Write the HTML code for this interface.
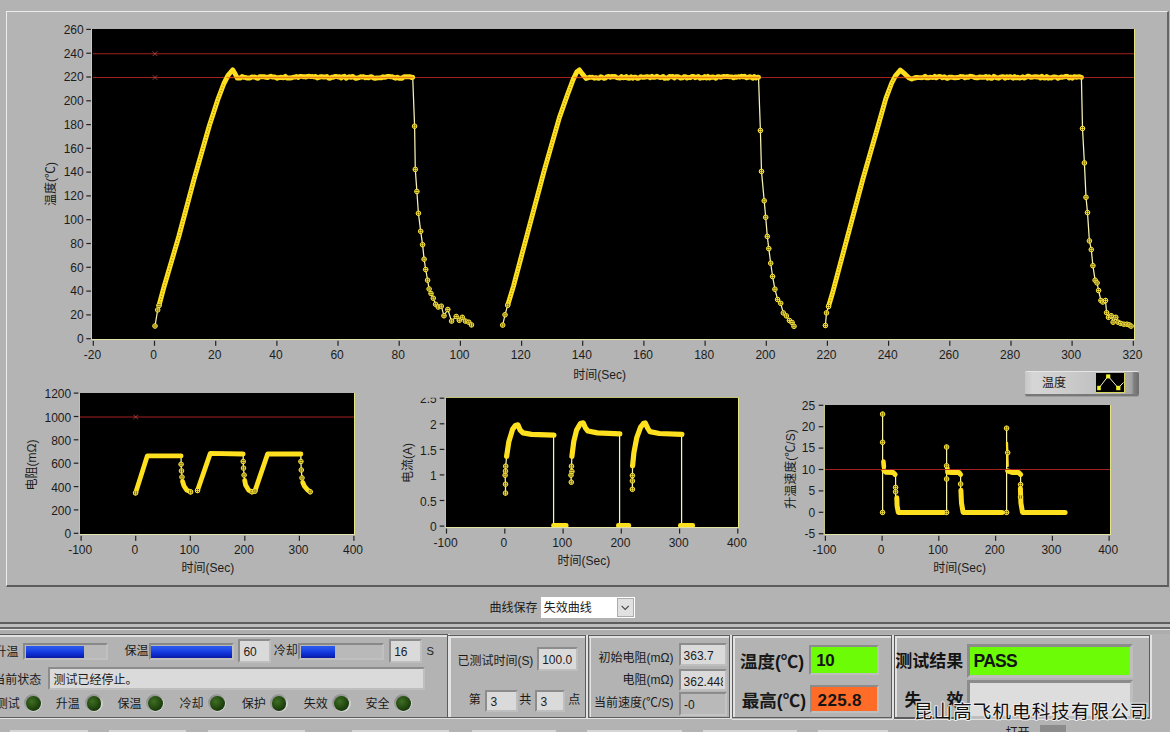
<!DOCTYPE html><html lang="zh"><head><meta charset="utf-8"><title>LabVIEW 测试曲线</title><style>html,body{margin:0;padding:0;overflow:hidden}body{width:1170px;height:732px;overflow:hidden;position:relative;background:#b3b3b3;font-family:"Liberation Sans","Noto Sans CJK SC",sans-serif;font-size:12px;color:#1c1c1c}.cj{display:inline-block;color:#1a1a1a}#root{position:absolute;left:0;top:0;width:1170px;height:732px;overflow:hidden;background:#b3b3b3}</style></head><body><div id="root"><svg width="0" height="0" style="position:absolute"><defs><g id="mk"><circle r="2.3" fill="#3a3000" stroke="#ffea40" stroke-width="1"/><path d="M-2.3 0H2.3M0 -2.3V2.3" stroke="#ffea40" stroke-width="0.8"/></g></defs></svg><div style="position:absolute;left:6.0px;top:11.0px;width:1162.5px;height:576.4px;box-sizing:border-box;background:#b4b4b4;border:solid;border-width:1px 2px 2px 1px;border-color:#ececec #666 #5c5c5c #ececec;"></div><div style="position:absolute;left:90.8px;top:28.5px;width:1043.9px;height:311.7px;background:#000;border-style:solid;border-color:#c2c274 #e4e480 #e2e2a4 #c9c9b6;border-width:0 1.2px 1.2px 1.7px;box-sizing:border-box;"></div><svg style="position:absolute;left:92.5px;top:28.5px" width="1041.0" height="310.5" viewBox="92.5 28.5 1041.0 310.5"><line x1="92.5" x2="1133.5" y1="53.2" y2="53.2" stroke="#a32020" stroke-width="1.1"/><path d="M152.2 50.9l4.6 4.6m0 -4.6l-4.6 4.6" stroke="#b44a4a" stroke-width="0.8" fill="none"/><line x1="92.5" x2="1133.5" y1="77.0" y2="77.0" stroke="#a32020" stroke-width="1.1"/><path d="M152.2 74.7l4.6 4.6m0 -4.6l-4.6 4.6" stroke="#b44a4a" stroke-width="0.8" fill="none"/><polyline points="154.5,325.5 157.2,309.4 158.5,305.0 163.7,285.7 178.3,236.0 193.6,178.6 208.9,125.0 217.6,98.3 223.4,83.0 227.8,74.5 232.2,69.4 234.2,72.5 236.8,77.6 240.0,77.2 240.0,76.3 242.0,76.0 244.0,76.9 246.0,75.8 248.0,76.7 250.0,76.4 252.0,75.8 254.0,76.6 256.0,75.8 258.0,76.5 260.0,75.8 262.0,75.9 264.0,76.5 266.0,77.2 268.0,75.9 270.0,76.1 272.0,76.8 274.0,77.4 276.0,76.7 278.0,76.4 280.0,77.5 282.0,75.8 284.0,77.2 286.0,76.2 288.0,76.0 290.0,75.9 292.0,76.3 294.0,77.2 296.0,76.0 298.0,76.7 300.0,76.9 302.0,76.4 304.0,76.7 306.0,75.8 308.0,75.8 310.0,76.1 312.0,76.9 314.0,76.5 316.0,76.3 318.0,76.8 320.0,76.5 322.0,76.2 324.0,77.1 326.0,77.0 328.0,76.1 330.0,76.7 332.0,76.6 334.0,77.3 336.0,77.0 338.0,76.2 340.0,77.5 342.0,75.9 344.0,76.5 346.0,77.1 348.0,76.0 350.0,76.6 352.0,75.8 354.0,76.9 356.0,77.1 358.0,76.7 360.0,77.3 362.0,76.3 364.0,77.0 366.0,76.8 368.0,76.7 370.0,76.5 372.0,77.2 374.0,77.4 376.0,76.6 378.0,76.9 380.0,75.8 382.0,77.0 384.0,76.9 386.0,77.5 388.0,77.2 390.0,76.2 392.0,76.4 394.0,76.9 396.0,75.7 398.0,76.5 400.0,76.0 402.0,75.9 404.0,75.8 406.0,77.1 408.0,75.9 410.0,76.1 412.0,76.4 412.2,76.6 412.2,76.4 414.1,125.7 414.8,168.9 416.4,191.0 417.9,212.8 420.2,230.8 422.1,244.2 423.6,258.7 425.2,269.0 427.1,279.7 428.6,288.5 430.5,293.0 432.8,297.7 435.1,303.8 437.8,306.5 440.8,305.7 443.5,315.3 447.3,309.0 451.1,320.6 455.7,316.0 458.8,319.8 461.8,316.8 464.9,320.6 468.3,321.7 471.0,324.4" fill="none" stroke="#f7f2b4" stroke-width="1.25"/><polyline points="158.5,305.0 163.7,285.7 178.3,236.0 193.6,178.6 208.9,125.0 217.6,98.3 223.4,83.0 227.8,74.5 232.2,69.4 234.2,72.5 236.8,77.6 240.0,77.2 240.0,77.5 241.6,76.0 243.2,76.7 244.8,76.9 246.4,77.6 248.0,77.4 249.6,77.5 251.2,76.4 252.8,76.6 254.4,76.5 256.0,77.6 257.6,77.7 259.2,76.1 260.8,76.2 262.4,76.3 264.0,76.3 265.6,76.8 267.2,77.0 268.8,76.3 270.4,75.8 272.0,76.6 273.6,76.5 275.2,76.9 276.8,77.7 278.4,77.2 280.0,76.8 281.6,77.0 283.2,77.2 284.8,75.9 286.4,77.6 288.0,77.4 289.6,77.5 291.2,77.4 292.8,76.6 294.4,76.6 296.0,76.0 297.6,77.1 299.2,75.9 300.8,75.9 302.4,76.2 304.0,76.1 305.6,76.5 307.2,75.9 308.8,75.8 310.4,76.1 312.0,76.0 313.6,76.5 315.2,75.9 316.8,77.5 318.4,77.0 320.0,76.1 321.6,76.3 323.2,76.5 324.8,76.5 326.4,76.0 328.0,77.5 329.6,77.8 331.2,76.7 332.8,76.8 334.4,76.0 336.0,76.0 337.6,76.5 339.2,76.3 340.8,77.5 342.4,76.1 344.0,75.8 345.6,77.7 347.2,76.9 348.8,76.1 350.4,76.9 352.0,75.9 353.6,76.9 355.2,77.8 356.8,77.5 358.4,77.2 360.0,76.3 361.6,76.5 363.2,76.1 364.8,77.3 366.4,76.9 368.0,77.4 369.6,76.5 371.2,76.2 372.8,77.4 374.4,77.8 376.0,77.5 377.6,77.4 379.2,77.4 380.8,77.3 382.4,76.3 384.0,76.8 385.6,76.5 387.2,75.9 388.8,75.9 390.4,76.4 392.0,76.3 393.6,77.2 395.2,77.7 396.8,76.7 398.4,77.7 400.0,77.8 401.6,77.7 403.2,76.5 404.8,76.2 406.4,76.3 408.0,76.2 409.6,76.2 411.2,77.0 412.2,76.8" fill="none" stroke="#ffe01e" stroke-width="4.9" stroke-linecap="round" stroke-linejoin="round"/><polyline points="158.5,305.0 163.7,285.7 178.3,236.0 193.6,178.6 208.9,125.0 217.6,98.3 223.4,83.0" fill="none" stroke="#4a3c00" stroke-width="1.2" stroke-dasharray="1 1.9" opacity="0.55"/><use href="#mk" x="154.5" y="325.5"/><use href="#mk" x="157.2" y="309.4"/><use href="#mk" x="158.5" y="305.0"/><use href="#mk" x="414.1" y="125.7"/><use href="#mk" x="414.8" y="168.9"/><use href="#mk" x="416.4" y="191.0"/><use href="#mk" x="417.9" y="212.8"/><use href="#mk" x="420.2" y="230.8"/><use href="#mk" x="422.1" y="244.2"/><use href="#mk" x="423.6" y="258.7"/><use href="#mk" x="425.2" y="269.0"/><use href="#mk" x="427.1" y="279.7"/><use href="#mk" x="428.6" y="288.5"/><use href="#mk" x="430.5" y="293.0"/><use href="#mk" x="432.8" y="297.7"/><use href="#mk" x="435.1" y="303.8"/><use href="#mk" x="437.8" y="306.5"/><use href="#mk" x="440.8" y="305.7"/><use href="#mk" x="443.5" y="315.3"/><use href="#mk" x="447.3" y="309.0"/><use href="#mk" x="451.1" y="320.6"/><use href="#mk" x="455.7" y="316.0"/><use href="#mk" x="458.8" y="319.8"/><use href="#mk" x="461.8" y="316.8"/><use href="#mk" x="464.9" y="320.6"/><use href="#mk" x="468.3" y="321.7"/><use href="#mk" x="471.0" y="324.4"/><polyline points="502.2,324.6 504.5,314.3 507.2,304.7 513.0,285.6 528.2,228.3 543.5,170.9 558.8,117.4 566.9,94.4 572.6,79.1 576.2,71.5 578.9,69.4 581.8,73.4 585.6,78.0 589.0,77.0 589.0,77.3 591.0,77.2 593.0,76.6 595.0,76.9 597.0,77.1 599.0,75.9 601.0,76.9 603.0,77.3 605.0,77.1 607.0,77.1 609.0,76.6 611.0,76.0 613.0,77.1 615.0,76.3 617.0,77.1 619.0,77.4 621.0,76.4 623.0,76.4 625.0,77.4 627.0,77.0 629.0,76.0 631.0,75.9 633.0,76.0 635.0,77.3 637.0,77.2 639.0,76.0 641.0,77.2 643.0,77.5 645.0,76.9 647.0,76.3 649.0,76.7 651.0,75.9 653.0,75.7 655.0,77.4 657.0,76.9 659.0,76.6 661.0,77.4 663.0,76.5 665.0,77.3 667.0,77.2 669.0,76.1 671.0,76.2 673.0,76.2 675.0,76.1 677.0,76.8 679.0,76.2 681.0,76.5 683.0,75.9 685.0,77.3 687.0,76.3 689.0,76.5 691.0,76.8 693.0,77.3 695.0,76.5 697.0,77.4 699.0,76.6 701.0,76.7 703.0,76.6 705.0,75.7 707.0,76.5 709.0,76.0 711.0,75.7 713.0,77.1 715.0,76.0 717.0,76.6 719.0,77.0 721.0,76.7 723.0,76.3 725.0,76.6 727.0,76.7 729.0,77.1 731.0,75.9 733.0,76.7 735.0,76.1 737.0,76.2 739.0,77.1 741.0,76.6 743.0,76.7 745.0,77.1 747.0,77.3 749.0,76.5 751.0,76.8 753.0,76.6 755.0,76.6 757.0,76.9 758.0,76.6 758.0,76.4 759.9,130.0 761.0,170.9 763.7,200.3 765.2,216.8 766.8,235.9 768.3,248.1 770.2,262.7 772.1,276.0 774.4,288.7 777.1,299.0 780.2,302.8 782.8,312.4 785.9,315.4 788.9,320.0 791.6,322.0 793.5,325.8" fill="none" stroke="#f7f2b4" stroke-width="1.25"/><polyline points="507.2,304.7 513.0,285.6 528.2,228.3 543.5,170.9 558.8,117.4 566.9,94.4 572.6,79.1 576.2,71.5 578.9,69.4 581.8,73.4 585.6,78.0 589.0,77.0 589.0,76.7 590.6,76.9 592.2,76.8 593.8,77.7 595.4,77.2 597.0,77.6 598.6,77.7 600.2,76.3 601.8,76.9 603.4,77.7 605.0,77.5 606.6,76.1 608.2,76.0 609.8,76.7 611.4,75.9 613.0,76.3 614.6,75.9 616.2,77.1 617.8,77.4 619.4,77.6 621.0,76.1 622.6,77.2 624.2,77.1 625.8,76.1 627.4,77.6 629.0,77.7 630.6,76.2 632.2,77.7 633.8,76.6 635.4,76.8 637.0,77.8 638.6,77.5 640.2,76.1 641.8,76.7 643.4,76.8 645.0,76.5 646.6,76.2 648.2,76.4 649.8,77.2 651.4,75.8 653.0,76.9 654.6,76.7 656.2,75.8 657.8,76.5 659.4,77.0 661.0,76.8 662.6,75.9 664.2,77.8 665.8,77.4 667.4,77.7 669.0,76.0 670.6,76.3 672.2,75.9 673.8,77.4 675.4,76.3 677.0,76.1 678.6,76.6 680.2,77.6 681.8,77.4 683.4,76.3 685.0,76.1 686.6,77.6 688.2,76.9 689.8,77.2 691.4,76.0 693.0,75.9 694.6,77.2 696.2,76.7 697.8,75.9 699.4,77.7 701.0,77.1 702.6,77.4 704.2,76.0 705.8,77.5 707.4,75.9 709.0,77.5 710.6,76.7 712.2,76.5 713.8,76.9 715.4,77.7 717.0,76.3 718.6,76.1 720.2,76.9 721.8,76.3 723.4,76.0 725.0,76.1 726.6,75.9 728.2,76.2 729.8,76.4 731.4,76.4 733.0,77.3 734.6,76.4 736.2,76.8 737.8,76.2 739.4,76.5 741.0,75.8 742.6,76.3 744.2,75.8 745.8,77.3 747.4,76.9 749.0,76.2 750.6,76.7 752.2,77.7 753.8,76.0 755.4,77.4 757.0,76.7 758.0,76.8" fill="none" stroke="#ffe01e" stroke-width="4.9" stroke-linecap="round" stroke-linejoin="round"/><polyline points="507.2,304.7 513.0,285.6 528.2,228.3 543.5,170.9 558.8,117.4 566.9,94.4 572.6,79.1" fill="none" stroke="#4a3c00" stroke-width="1.2" stroke-dasharray="1 1.9" opacity="0.55"/><use href="#mk" x="502.2" y="324.6"/><use href="#mk" x="504.5" y="314.3"/><use href="#mk" x="507.2" y="304.7"/><use href="#mk" x="759.9" y="130.0"/><use href="#mk" x="761.0" y="170.9"/><use href="#mk" x="763.7" y="200.3"/><use href="#mk" x="765.2" y="216.8"/><use href="#mk" x="766.8" y="235.9"/><use href="#mk" x="768.3" y="248.1"/><use href="#mk" x="770.2" y="262.7"/><use href="#mk" x="772.1" y="276.0"/><use href="#mk" x="774.4" y="288.7"/><use href="#mk" x="777.1" y="299.0"/><use href="#mk" x="780.2" y="302.8"/><use href="#mk" x="782.8" y="312.4"/><use href="#mk" x="785.9" y="315.4"/><use href="#mk" x="788.9" y="320.0"/><use href="#mk" x="791.6" y="322.0"/><use href="#mk" x="793.5" y="325.8"/><polyline points="824.9,325.0 826.0,312.4 828.0,306.0 831.8,293.3 847.1,235.9 862.4,178.5 877.7,125.0 885.3,98.2 891.0,83.0 894.9,75.3 899.8,69.6 904.4,73.4 908.3,77.2 911.3,78.6 915.0,77.0 915.0,76.6 917.0,77.2 919.0,76.4 921.0,76.6 923.0,76.9 925.0,77.5 927.0,76.3 929.0,77.2 931.0,77.0 933.0,76.8 935.0,76.4 937.0,76.3 939.0,75.8 941.0,75.9 943.0,75.8 945.0,77.0 947.0,76.2 949.0,76.0 951.0,75.9 953.0,77.2 955.0,77.3 957.0,76.9 959.0,76.2 961.0,76.1 963.0,76.2 965.0,76.5 967.0,76.0 969.0,76.5 971.0,76.2 973.0,77.4 975.0,77.5 977.0,76.7 979.0,76.1 981.0,77.4 983.0,76.3 985.0,76.3 987.0,75.7 989.0,76.4 991.0,76.6 993.0,76.6 995.0,76.1 997.0,76.6 999.0,75.7 1001.0,76.2 1003.0,75.9 1005.0,76.4 1007.0,75.8 1009.0,75.7 1011.0,76.2 1013.0,76.1 1015.0,76.8 1017.0,76.7 1019.0,77.1 1021.0,76.9 1023.0,77.0 1025.0,77.3 1027.0,76.4 1029.0,76.3 1031.0,77.5 1033.0,76.0 1035.0,77.0 1037.0,76.9 1039.0,75.8 1041.0,77.2 1043.0,77.3 1045.0,76.8 1047.0,77.0 1049.0,77.2 1051.0,76.0 1053.0,76.6 1055.0,76.6 1057.0,77.2 1059.0,77.1 1061.0,77.2 1063.0,76.8 1065.0,77.3 1067.0,76.9 1069.0,76.9 1071.0,76.1 1073.0,75.8 1075.0,75.9 1077.0,76.3 1079.0,75.9 1080.9,76.6 1080.9,76.4 1082.0,128.0 1083.9,162.4 1085.5,196.8 1087.0,212.1 1088.9,240.4 1090.8,249.1 1092.4,265.2 1094.6,279.7 1096.6,282.4 1098.1,290.0 1100.4,300.0 1102.3,301.5 1105.0,300.0 1106.1,312.2 1108.0,316.8 1110.7,315.2 1112.6,321.7 1115.3,316.8 1117.6,321.7 1120.2,322.9 1123.3,323.7 1126.4,323.7 1128.7,324.4 1130.6,325.6" fill="none" stroke="#f7f2b4" stroke-width="1.25"/><polyline points="828.0,306.0 831.8,293.3 847.1,235.9 862.4,178.5 877.7,125.0 885.3,98.2 891.0,83.0 894.9,75.3 899.8,69.6 904.4,73.4 908.3,77.2 911.3,78.6 915.0,77.0 915.0,77.5 916.6,76.9 918.2,77.1 919.8,77.1 921.4,77.2 923.0,76.8 924.6,75.8 926.2,77.4 927.8,77.3 929.4,76.8 931.0,76.9 932.6,77.1 934.2,75.9 935.8,77.3 937.4,76.3 939.0,75.9 940.6,76.3 942.2,77.3 943.8,76.2 945.4,77.3 947.0,77.8 948.6,76.8 950.2,76.6 951.8,76.8 953.4,77.2 955.0,77.3 956.6,77.0 958.2,77.1 959.8,76.0 961.4,76.1 963.0,76.3 964.6,77.3 966.2,76.4 967.8,76.9 969.4,75.8 971.0,75.9 972.6,76.3 974.2,77.1 975.8,77.2 977.4,77.2 979.0,76.4 980.6,76.8 982.2,76.7 983.8,76.7 985.4,76.0 987.0,77.6 988.6,76.2 990.2,77.8 991.8,77.7 993.4,75.8 995.0,76.7 996.6,77.4 998.2,77.7 999.8,76.7 1001.4,76.3 1003.0,76.2 1004.6,77.7 1006.2,76.2 1007.8,77.0 1009.4,76.1 1011.0,76.8 1012.6,77.7 1014.2,76.1 1015.8,77.4 1017.4,76.8 1019.0,77.6 1020.6,77.2 1022.2,76.3 1023.8,77.6 1025.4,76.8 1027.0,75.8 1028.6,75.8 1030.2,76.8 1031.8,76.7 1033.4,76.4 1035.0,76.1 1036.6,76.5 1038.2,76.4 1039.8,77.5 1041.4,75.8 1043.0,77.3 1044.6,77.5 1046.2,76.0 1047.8,77.7 1049.4,77.2 1051.0,77.6 1052.6,76.4 1054.2,76.5 1055.8,76.6 1057.4,77.8 1059.0,77.0 1060.6,76.5 1062.2,76.7 1063.8,76.4 1065.4,75.9 1067.0,76.0 1068.6,77.5 1070.2,76.4 1071.8,77.7 1073.4,76.3 1075.0,76.3 1076.6,76.8 1078.2,76.2 1079.8,76.5 1080.9,76.8" fill="none" stroke="#ffe01e" stroke-width="4.9" stroke-linecap="round" stroke-linejoin="round"/><polyline points="828.0,306.0 831.8,293.3 847.1,235.9 862.4,178.5 877.7,125.0 885.3,98.2 891.0,83.0 894.9,75.3" fill="none" stroke="#4a3c00" stroke-width="1.2" stroke-dasharray="1 1.9" opacity="0.55"/><use href="#mk" x="824.9" y="325.0"/><use href="#mk" x="826.0" y="312.4"/><use href="#mk" x="828.0" y="306.0"/><use href="#mk" x="1082.0" y="128.0"/><use href="#mk" x="1083.9" y="162.4"/><use href="#mk" x="1085.5" y="196.8"/><use href="#mk" x="1087.0" y="212.1"/><use href="#mk" x="1088.9" y="240.4"/><use href="#mk" x="1090.8" y="249.1"/><use href="#mk" x="1092.4" y="265.2"/><use href="#mk" x="1094.6" y="279.7"/><use href="#mk" x="1096.6" y="282.4"/><use href="#mk" x="1098.1" y="290.0"/><use href="#mk" x="1100.4" y="300.0"/><use href="#mk" x="1102.3" y="301.5"/><use href="#mk" x="1105.0" y="300.0"/><use href="#mk" x="1106.1" y="312.2"/><use href="#mk" x="1108.0" y="316.8"/><use href="#mk" x="1110.7" y="315.2"/><use href="#mk" x="1112.6" y="321.7"/><use href="#mk" x="1115.3" y="316.8"/><use href="#mk" x="1117.6" y="321.7"/><use href="#mk" x="1120.2" y="322.9"/><use href="#mk" x="1123.3" y="323.7"/><use href="#mk" x="1126.4" y="323.7"/><use href="#mk" x="1128.7" y="324.4"/><use href="#mk" x="1130.6" y="325.6"/><line x1="226.0" x2="413.0" y1="77.0" y2="77.0" stroke="#e04a10" stroke-width="1.3" opacity="0.6"/><line x1="573.0" x2="759.0" y1="77.0" y2="77.0" stroke="#e04a10" stroke-width="1.3" opacity="0.6"/><line x1="894.0" x2="1082.0" y1="77.0" y2="77.0" stroke="#e04a10" stroke-width="1.3" opacity="0.6"/></svg><svg style="position:absolute;left:0;top:0;pointer-events:none" width="1170" height="732"><rect x="86.3" y="338.1" width="4.6" height="1.2" fill="#222"/><rect x="86.3" y="314.3" width="4.6" height="1.2" fill="#222"/><rect x="86.3" y="290.5" width="4.6" height="1.2" fill="#222"/><rect x="86.3" y="266.7" width="4.6" height="1.2" fill="#222"/><rect x="86.3" y="242.9" width="4.6" height="1.2" fill="#222"/><rect x="86.3" y="219.1" width="4.6" height="1.2" fill="#222"/><rect x="86.3" y="195.3" width="4.6" height="1.2" fill="#222"/><rect x="86.3" y="171.5" width="4.6" height="1.2" fill="#222"/><rect x="86.3" y="147.7" width="4.6" height="1.2" fill="#222"/><rect x="86.3" y="124.0" width="4.6" height="1.2" fill="#222"/><rect x="86.3" y="100.2" width="4.6" height="1.2" fill="#222"/><rect x="86.3" y="76.4" width="4.6" height="1.2" fill="#222"/><rect x="86.3" y="52.6" width="4.6" height="1.2" fill="#222"/><rect x="86.3" y="28.8" width="4.6" height="1.2" fill="#222"/><rect x="92.7" y="340.8" width="1.2" height="5" fill="#222"/><rect x="153.9" y="340.8" width="1.2" height="5" fill="#222"/><rect x="215.1" y="340.8" width="1.2" height="5" fill="#222"/><rect x="276.3" y="340.8" width="1.2" height="5" fill="#222"/><rect x="337.4" y="340.8" width="1.2" height="5" fill="#222"/><rect x="398.6" y="340.8" width="1.2" height="5" fill="#222"/><rect x="459.8" y="340.8" width="1.2" height="5" fill="#222"/><rect x="521.0" y="340.8" width="1.2" height="5" fill="#222"/><rect x="582.1" y="340.8" width="1.2" height="5" fill="#222"/><rect x="643.3" y="340.8" width="1.2" height="5" fill="#222"/><rect x="704.5" y="340.8" width="1.2" height="5" fill="#222"/><rect x="765.7" y="340.8" width="1.2" height="5" fill="#222"/><rect x="826.8" y="340.8" width="1.2" height="5" fill="#222"/><rect x="888.0" y="340.8" width="1.2" height="5" fill="#222"/><rect x="949.2" y="340.8" width="1.2" height="5" fill="#222"/><rect x="1010.4" y="340.8" width="1.2" height="5" fill="#222"/><rect x="1071.5" y="340.8" width="1.2" height="5" fill="#222"/><rect x="1132.7" y="340.8" width="1.2" height="5" fill="#222"/></svg><div style="position:absolute;top:331.0px;font-size:12px;line-height:17px;height:17px;white-space:nowrap;color:#1c1c1c;right:1086.3px;text-align:right;">0</div><div style="position:absolute;top:307.2px;font-size:12px;line-height:17px;height:17px;white-space:nowrap;color:#1c1c1c;right:1086.3px;text-align:right;">20</div><div style="position:absolute;top:283.4px;font-size:12px;line-height:17px;height:17px;white-space:nowrap;color:#1c1c1c;right:1086.3px;text-align:right;">40</div><div style="position:absolute;top:259.6px;font-size:12px;line-height:17px;height:17px;white-space:nowrap;color:#1c1c1c;right:1086.3px;text-align:right;">60</div><div style="position:absolute;top:235.8px;font-size:12px;line-height:17px;height:17px;white-space:nowrap;color:#1c1c1c;right:1086.3px;text-align:right;">80</div><div style="position:absolute;top:212.0px;font-size:12px;line-height:17px;height:17px;white-space:nowrap;color:#1c1c1c;right:1086.3px;text-align:right;">100</div><div style="position:absolute;top:188.2px;font-size:12px;line-height:17px;height:17px;white-space:nowrap;color:#1c1c1c;right:1086.3px;text-align:right;">120</div><div style="position:absolute;top:164.4px;font-size:12px;line-height:17px;height:17px;white-space:nowrap;color:#1c1c1c;right:1086.3px;text-align:right;">140</div><div style="position:absolute;top:140.6px;font-size:12px;line-height:17px;height:17px;white-space:nowrap;color:#1c1c1c;right:1086.3px;text-align:right;">160</div><div style="position:absolute;top:116.9px;font-size:12px;line-height:17px;height:17px;white-space:nowrap;color:#1c1c1c;right:1086.3px;text-align:right;">180</div><div style="position:absolute;top:93.1px;font-size:12px;line-height:17px;height:17px;white-space:nowrap;color:#1c1c1c;right:1086.3px;text-align:right;">200</div><div style="position:absolute;top:69.3px;font-size:12px;line-height:17px;height:17px;white-space:nowrap;color:#1c1c1c;right:1086.3px;text-align:right;">220</div><div style="position:absolute;top:45.5px;font-size:12px;line-height:17px;height:17px;white-space:nowrap;color:#1c1c1c;right:1086.3px;text-align:right;">240</div><div style="position:absolute;top:21.7px;font-size:12px;line-height:17px;height:17px;white-space:nowrap;color:#1c1c1c;right:1086.3px;text-align:right;">260</div><div style="position:absolute;top:347.0px;font-size:12px;line-height:17px;height:17px;white-space:nowrap;color:#1c1c1c;left:92.4px;width:400px;margin-left:-200px;text-align:center;">-20</div><div style="position:absolute;top:347.0px;font-size:12px;line-height:17px;height:17px;white-space:nowrap;color:#1c1c1c;left:153.6px;width:400px;margin-left:-200px;text-align:center;">0</div><div style="position:absolute;top:347.0px;font-size:12px;line-height:17px;height:17px;white-space:nowrap;color:#1c1c1c;left:214.8px;width:400px;margin-left:-200px;text-align:center;">20</div><div style="position:absolute;top:347.0px;font-size:12px;line-height:17px;height:17px;white-space:nowrap;color:#1c1c1c;left:276.0px;width:400px;margin-left:-200px;text-align:center;">40</div><div style="position:absolute;top:347.0px;font-size:12px;line-height:17px;height:17px;white-space:nowrap;color:#1c1c1c;left:337.1px;width:400px;margin-left:-200px;text-align:center;">60</div><div style="position:absolute;top:347.0px;font-size:12px;line-height:17px;height:17px;white-space:nowrap;color:#1c1c1c;left:398.3px;width:400px;margin-left:-200px;text-align:center;">80</div><div style="position:absolute;top:347.0px;font-size:12px;line-height:17px;height:17px;white-space:nowrap;color:#1c1c1c;left:459.5px;width:400px;margin-left:-200px;text-align:center;">100</div><div style="position:absolute;top:347.0px;font-size:12px;line-height:17px;height:17px;white-space:nowrap;color:#1c1c1c;left:520.7px;width:400px;margin-left:-200px;text-align:center;">120</div><div style="position:absolute;top:347.0px;font-size:12px;line-height:17px;height:17px;white-space:nowrap;color:#1c1c1c;left:581.8px;width:400px;margin-left:-200px;text-align:center;">140</div><div style="position:absolute;top:347.0px;font-size:12px;line-height:17px;height:17px;white-space:nowrap;color:#1c1c1c;left:643.0px;width:400px;margin-left:-200px;text-align:center;">160</div><div style="position:absolute;top:347.0px;font-size:12px;line-height:17px;height:17px;white-space:nowrap;color:#1c1c1c;left:704.2px;width:400px;margin-left:-200px;text-align:center;">180</div><div style="position:absolute;top:347.0px;font-size:12px;line-height:17px;height:17px;white-space:nowrap;color:#1c1c1c;left:765.4px;width:400px;margin-left:-200px;text-align:center;">200</div><div style="position:absolute;top:347.0px;font-size:12px;line-height:17px;height:17px;white-space:nowrap;color:#1c1c1c;left:826.5px;width:400px;margin-left:-200px;text-align:center;">220</div><div style="position:absolute;top:347.0px;font-size:12px;line-height:17px;height:17px;white-space:nowrap;color:#1c1c1c;left:887.7px;width:400px;margin-left:-200px;text-align:center;">240</div><div style="position:absolute;top:347.0px;font-size:12px;line-height:17px;height:17px;white-space:nowrap;color:#1c1c1c;left:948.9px;width:400px;margin-left:-200px;text-align:center;">260</div><div style="position:absolute;top:347.0px;font-size:12px;line-height:17px;height:17px;white-space:nowrap;color:#1c1c1c;left:1010.1px;width:400px;margin-left:-200px;text-align:center;">280</div><div style="position:absolute;top:347.0px;font-size:12px;line-height:17px;height:17px;white-space:nowrap;color:#1c1c1c;left:1071.2px;width:400px;margin-left:-200px;text-align:center;">300</div><div style="position:absolute;top:347.0px;font-size:12px;line-height:17px;height:17px;white-space:nowrap;color:#1c1c1c;left:1132.4px;width:400px;margin-left:-200px;text-align:center;">320</div><div style="position:absolute;top:366.5px;font-size:12px;line-height:17px;height:17px;white-space:nowrap;color:#1c1c1c;left:599.6px;width:400px;margin-left:-200px;text-align:center;"><span class="cj">时间</span>(Sec)</div><div style="position:absolute;left:51.0px;top:183.5px;width:200px;height:18px;margin-left:-100px;margin-top:-9px;line-height:18px;font-size:12px;text-align:center;white-space:nowrap;color:#1c1c1c;transform:rotate(-90deg);"><span class="cj">温度</span>(<span class="cj">℃</span>)</div><div style="position:absolute;left:78.8px;top:392.5px;width:276.7px;height:142.5px;background:#000;border-style:solid;border-color:#c2c274 #e4e480 #e2e2a4 #c6c688;border-width:0 1.2px 1.2px 1.2px;box-sizing:border-box;"></div><svg style="position:absolute;left:80.0px;top:392.5px" width="274.3" height="141.3" viewBox="80.0 392.5 274.3 141.3"><line x1="80.0" x2="354.3" y1="416.5" y2="416.5" stroke="#a32020" stroke-width="1.1"/><path d="M133.4 414.2l4.6 4.6m0 -4.6l-4.6 4.6" stroke="#b44a4a" stroke-width="0.8" fill="none"/><polyline points="181.1,455.4 181.1,463.8 181.5,470.4 182.0,476.6 182.6,481.0" fill="none" stroke="#f7f2b4" stroke-width="1.25"/><polyline points="135.6,492.4 147.3,455.4 181.1,455.4" fill="none" stroke="#ffe01e" stroke-width="4.8" stroke-linecap="round" stroke-linejoin="round"/><polyline points="182.6,481.0 184.0,485.5 186.8,489.6 190.6,491.4" fill="none" stroke="#ffe01e" stroke-width="4.8" stroke-linecap="round" stroke-linejoin="round"/><use href="#mk" x="135.6" y="492.4"/><use href="#mk" x="181.1" y="463.8"/><use href="#mk" x="181.5" y="470.4"/><use href="#mk" x="182.0" y="476.6"/><use href="#mk" x="190.6" y="491.4"/><polyline points="243.2,453.5 243.2,461.0 243.5,467.6 244.1,474.6 244.7,480.0" fill="none" stroke="#f7f2b4" stroke-width="1.25"/><polyline points="197.5,490.0 210.3,452.9 243.2,453.5" fill="none" stroke="#ffe01e" stroke-width="4.8" stroke-linecap="round" stroke-linejoin="round"/><polyline points="244.7,480.0 245.6,484.5 248.6,489.6 252.0,491.3" fill="none" stroke="#ffe01e" stroke-width="4.8" stroke-linecap="round" stroke-linejoin="round"/><use href="#mk" x="197.5" y="490.0"/><use href="#mk" x="243.2" y="461.0"/><use href="#mk" x="243.5" y="467.6"/><use href="#mk" x="244.1" y="474.6"/><use href="#mk" x="252.0" y="491.3"/><polyline points="300.9,453.5 300.9,461.0 301.3,469.5 302.0,477.4 302.8,482.0" fill="none" stroke="#f7f2b4" stroke-width="1.25"/><polyline points="254.9,490.6 267.6,453.5 300.9,453.5" fill="none" stroke="#ffe01e" stroke-width="4.8" stroke-linecap="round" stroke-linejoin="round"/><polyline points="302.8,482.0 304.3,485.5 307.6,489.6 310.2,491.3" fill="none" stroke="#ffe01e" stroke-width="4.8" stroke-linecap="round" stroke-linejoin="round"/><use href="#mk" x="254.9" y="490.6"/><use href="#mk" x="300.9" y="461.0"/><use href="#mk" x="301.3" y="469.5"/><use href="#mk" x="302.0" y="477.4"/><use href="#mk" x="310.2" y="491.3"/></svg><svg style="position:absolute;left:0;top:0;pointer-events:none" width="1170" height="732"><rect x="73.8" y="532.7" width="4.6" height="1.2" fill="#222"/><rect x="73.8" y="509.3" width="4.6" height="1.2" fill="#222"/><rect x="73.8" y="486.0" width="4.6" height="1.2" fill="#222"/><rect x="73.8" y="462.6" width="4.6" height="1.2" fill="#222"/><rect x="73.8" y="439.2" width="4.6" height="1.2" fill="#222"/><rect x="73.8" y="415.9" width="4.6" height="1.2" fill="#222"/><rect x="73.8" y="392.5" width="4.6" height="1.2" fill="#222"/><rect x="80.5" y="535.8" width="1.2" height="5" fill="#222"/><rect x="135.1" y="535.8" width="1.2" height="5" fill="#222"/><rect x="189.7" y="535.8" width="1.2" height="5" fill="#222"/><rect x="244.2" y="535.8" width="1.2" height="5" fill="#222"/><rect x="298.8" y="535.8" width="1.2" height="5" fill="#222"/><rect x="353.3" y="535.8" width="1.2" height="5" fill="#222"/></svg><div style="position:absolute;top:526.4px;font-size:12px;line-height:17px;height:17px;white-space:nowrap;color:#1c1c1c;right:1098.8px;text-align:right;">0</div><div style="position:absolute;top:503.0px;font-size:12px;line-height:17px;height:17px;white-space:nowrap;color:#1c1c1c;right:1098.8px;text-align:right;">200</div><div style="position:absolute;top:479.7px;font-size:12px;line-height:17px;height:17px;white-space:nowrap;color:#1c1c1c;right:1098.8px;text-align:right;">400</div><div style="position:absolute;top:456.3px;font-size:12px;line-height:17px;height:17px;white-space:nowrap;color:#1c1c1c;right:1098.8px;text-align:right;">600</div><div style="position:absolute;top:432.9px;font-size:12px;line-height:17px;height:17px;white-space:nowrap;color:#1c1c1c;right:1098.8px;text-align:right;">800</div><div style="position:absolute;top:409.6px;font-size:12px;line-height:17px;height:17px;white-space:nowrap;color:#1c1c1c;right:1098.8px;text-align:right;">1000</div><div style="position:absolute;top:386.2px;font-size:12px;line-height:17px;height:17px;white-space:nowrap;color:#1c1c1c;right:1098.8px;text-align:right;">1200</div><div style="position:absolute;top:542.2px;font-size:12px;line-height:17px;height:17px;white-space:nowrap;color:#1c1c1c;left:80.2px;width:400px;margin-left:-200px;text-align:center;">-100</div><div style="position:absolute;top:542.2px;font-size:12px;line-height:17px;height:17px;white-space:nowrap;color:#1c1c1c;left:134.8px;width:400px;margin-left:-200px;text-align:center;">0</div><div style="position:absolute;top:542.2px;font-size:12px;line-height:17px;height:17px;white-space:nowrap;color:#1c1c1c;left:189.4px;width:400px;margin-left:-200px;text-align:center;">100</div><div style="position:absolute;top:542.2px;font-size:12px;line-height:17px;height:17px;white-space:nowrap;color:#1c1c1c;left:243.9px;width:400px;margin-left:-200px;text-align:center;">200</div><div style="position:absolute;top:542.2px;font-size:12px;line-height:17px;height:17px;white-space:nowrap;color:#1c1c1c;left:298.5px;width:400px;margin-left:-200px;text-align:center;">300</div><div style="position:absolute;top:542.2px;font-size:12px;line-height:17px;height:17px;white-space:nowrap;color:#1c1c1c;left:353.0px;width:400px;margin-left:-200px;text-align:center;">400</div><div style="position:absolute;top:560.3px;font-size:12px;line-height:17px;height:17px;white-space:nowrap;color:#1c1c1c;left:207.9px;width:400px;margin-left:-200px;text-align:center;"><span class="cj">时间</span>(Sec)</div><div style="position:absolute;left:31.5px;top:464.5px;width:200px;height:18px;margin-left:-100px;margin-top:-9px;line-height:18px;font-size:12px;text-align:center;white-space:nowrap;color:#1c1c1c;transform:rotate(-90deg);"><span class="cj">电阻</span>(mΩ)</div><div style="position:absolute;left:444.7px;top:397.0px;width:294.7px;height:130.8px;background:#000;border-style:solid;border-color:#c2c274 #e4e480 #e2e2a4 #c6c688;border-width:1px 1.2px 1.2px 1.2px;box-sizing:border-box;"></div><svg style="position:absolute;left:445.9px;top:398.0px" width="292.3" height="128.6" viewBox="445.9 398.0 292.3 128.6"><polyline points="505.4,493.1 505.4,484.2 505.0,475.2 505.4,471.1 505.6,466.2 506.5,456.4 508.8,441.4 512.6,429.1 515.4,425.4 517.8,424.8 520.1,430.1 522.9,432.9 531.4,434.4 553.9,435.2 553.5,435.2 553.5,525.6 566.2,525.6" fill="none" stroke="#f7f2b4" stroke-width="1.25"/><polyline points="506.5,456.4 508.8,441.4 512.6,429.1 515.4,425.4 517.8,424.8 520.1,430.1 522.9,432.9 531.4,434.4 553.9,435.2" fill="none" stroke="#ffe01e" stroke-width="5.2" stroke-linecap="round" stroke-linejoin="round"/><polyline points="553.4,525.4 566.2,525.4" fill="none" stroke="#ffe01e" stroke-width="4.6" stroke-linecap="round" stroke-linejoin="round"/><use href="#mk" x="505.4" y="493.1"/><use href="#mk" x="505.4" y="484.2"/><use href="#mk" x="505.0" y="475.2"/><use href="#mk" x="505.4" y="471.1"/><use href="#mk" x="505.6" y="466.2"/><polyline points="571.2,482.2 570.9,475.2 571.8,471.5 571.4,466.2 571.8,456.4 573.7,441.4 576.5,430.1 580.3,423.5 583.1,422.9 585.5,428.2 587.8,431.0 597.2,432.9 619.7,433.8 619.5,433.8 619.5,525.6 628.8,525.6" fill="none" stroke="#f7f2b4" stroke-width="1.25"/><polyline points="571.8,456.4 573.7,441.4 576.5,430.1 580.3,423.5 583.1,422.9 585.5,428.2 587.8,431.0 597.2,432.9 619.7,433.8" fill="none" stroke="#ffe01e" stroke-width="5.2" stroke-linecap="round" stroke-linejoin="round"/><polyline points="618.2,525.4 628.8,525.4" fill="none" stroke="#ffe01e" stroke-width="4.6" stroke-linecap="round" stroke-linejoin="round"/><use href="#mk" x="571.2" y="482.2"/><use href="#mk" x="570.9" y="475.2"/><use href="#mk" x="571.8" y="471.5"/><use href="#mk" x="571.4" y="466.2"/><polyline points="632.3,489.3 632.3,480.9 632.3,475.6 632.5,465.8 633.8,452.7 636.7,437.6 640.4,427.3 643.3,423.5 645.1,422.9 647.6,428.2 649.8,431.6 659.2,433.5 681.8,434.4 681.5,434.4 681.5,525.6 692.7,525.6" fill="none" stroke="#f7f2b4" stroke-width="1.25"/><polyline points="632.5,465.8 633.8,452.7 636.7,437.6 640.4,427.3 643.3,423.5 645.1,422.9 647.6,428.2 649.8,431.6 659.2,433.5 681.8,434.4" fill="none" stroke="#ffe01e" stroke-width="5.2" stroke-linecap="round" stroke-linejoin="round"/><polyline points="680.2,525.4 692.7,525.4" fill="none" stroke="#ffe01e" stroke-width="4.6" stroke-linecap="round" stroke-linejoin="round"/><use href="#mk" x="632.3" y="489.3"/><use href="#mk" x="632.3" y="480.9"/><use href="#mk" x="632.3" y="475.6"/></svg><svg style="position:absolute;left:0;top:0;pointer-events:none" width="1170" height="732"><rect x="439.7" y="525.5" width="4.6" height="1.2" fill="#222"/><rect x="439.7" y="499.9" width="4.6" height="1.2" fill="#222"/><rect x="439.7" y="474.3" width="4.6" height="1.2" fill="#222"/><rect x="439.7" y="448.8" width="4.6" height="1.2" fill="#222"/><rect x="439.7" y="423.2" width="4.6" height="1.2" fill="#222"/><rect x="439.7" y="397.6" width="4.6" height="1.2" fill="#222"/><rect x="445.9" y="528.6" width="1.2" height="5" fill="#222"/><rect x="504.2" y="528.6" width="1.2" height="5" fill="#222"/><rect x="562.5" y="528.6" width="1.2" height="5" fill="#222"/><rect x="620.7" y="528.6" width="1.2" height="5" fill="#222"/><rect x="679.0" y="528.6" width="1.2" height="5" fill="#222"/><rect x="737.2" y="528.6" width="1.2" height="5" fill="#222"/></svg><div style="position:absolute;top:519.2px;font-size:12px;line-height:17px;height:17px;white-space:nowrap;color:#1c1c1c;right:733.3px;text-align:right;">0</div><div style="position:absolute;top:493.6px;font-size:12px;line-height:17px;height:17px;white-space:nowrap;color:#1c1c1c;right:733.3px;text-align:right;">0.5</div><div style="position:absolute;top:468.0px;font-size:12px;line-height:17px;height:17px;white-space:nowrap;color:#1c1c1c;right:733.3px;text-align:right;">1</div><div style="position:absolute;top:442.5px;font-size:12px;line-height:17px;height:17px;white-space:nowrap;color:#1c1c1c;right:733.3px;text-align:right;">1.5</div><div style="position:absolute;top:416.9px;font-size:12px;line-height:17px;height:17px;white-space:nowrap;color:#1c1c1c;right:733.3px;text-align:right;">2</div><div style="position:absolute;top:391.3px;font-size:12px;line-height:17px;height:17px;white-space:nowrap;color:#1c1c1c;right:733.3px;text-align:right;clip-path:inset(6.5px 0 0 0);">2.5</div><div style="position:absolute;top:534.8px;font-size:12px;line-height:17px;height:17px;white-space:nowrap;color:#1c1c1c;left:445.6px;width:400px;margin-left:-200px;text-align:center;">-100</div><div style="position:absolute;top:534.8px;font-size:12px;line-height:17px;height:17px;white-space:nowrap;color:#1c1c1c;left:503.9px;width:400px;margin-left:-200px;text-align:center;">0</div><div style="position:absolute;top:534.8px;font-size:12px;line-height:17px;height:17px;white-space:nowrap;color:#1c1c1c;left:562.2px;width:400px;margin-left:-200px;text-align:center;">100</div><div style="position:absolute;top:534.8px;font-size:12px;line-height:17px;height:17px;white-space:nowrap;color:#1c1c1c;left:620.4px;width:400px;margin-left:-200px;text-align:center;">200</div><div style="position:absolute;top:534.8px;font-size:12px;line-height:17px;height:17px;white-space:nowrap;color:#1c1c1c;left:678.7px;width:400px;margin-left:-200px;text-align:center;">300</div><div style="position:absolute;top:534.8px;font-size:12px;line-height:17px;height:17px;white-space:nowrap;color:#1c1c1c;left:736.9px;width:400px;margin-left:-200px;text-align:center;">400</div><div style="position:absolute;top:553.2px;font-size:12px;line-height:17px;height:17px;white-space:nowrap;color:#1c1c1c;left:583.8px;width:400px;margin-left:-200px;text-align:center;"><span class="cj">时间</span>(Sec)</div><div style="position:absolute;left:408.0px;top:463.2px;width:200px;height:18px;margin-left:-100px;margin-top:-9px;line-height:18px;font-size:12px;text-align:center;white-space:nowrap;color:#1c1c1c;transform:rotate(-90deg);"><span class="cj">电流</span>(A)</div><div style="position:absolute;left:823.7px;top:405.0px;width:287.8px;height:130.0px;background:#000;border-style:solid;border-color:#c2c274 #e4e480 #e2e2a4 #c6c688;border-width:0 1.2px 1.2px 1.2px;box-sizing:border-box;"></div><svg style="position:absolute;left:824.9px;top:405.0px" width="285.4" height="128.8" viewBox="824.9 405.0 285.4 128.8"><line x1="824.9" x2="1110.3" y1="469.5" y2="469.5" stroke="#a32020" stroke-width="1.1"/><polyline points="882.5,512.4 882.5,414.1" fill="none" stroke="#f7f2b4" stroke-width="1.25"/><polyline points="895.5,474.0 895.5,500.0" fill="none" stroke="#f7f2b4" stroke-width="1.25"/><polyline points="883.3,461.5 883.8,467.0" fill="none" stroke="#ffe01e" stroke-width="4.6" stroke-linecap="round" stroke-linejoin="round"/><polyline points="883.8,470.5 886.0,472.2 893.0,472.4 895.0,474.5" fill="none" stroke="#ffe01e" stroke-width="5.0" stroke-linecap="round" stroke-linejoin="round"/><polyline points="896.7,497.8 897.0,506.0 898.2,512.4 943.7,512.4" fill="none" stroke="#ffe01e" stroke-width="5.0" stroke-linecap="round" stroke-linejoin="round"/><use href="#mk" x="882.5" y="414.1"/><use href="#mk" x="882.5" y="442.3"/><use href="#mk" x="882.5" y="512.4"/><use href="#mk" x="895.5" y="487.4"/><use href="#mk" x="895.5" y="491.8"/><polyline points="946.5,512.4 946.5,447.0" fill="none" stroke="#f7f2b4" stroke-width="1.25"/><polyline points="960.5,474.0 960.5,500.0" fill="none" stroke="#f7f2b4" stroke-width="1.25"/><polyline points="947.2,468.0 947.5,471.0" fill="none" stroke="#ffe01e" stroke-width="4.6" stroke-linecap="round" stroke-linejoin="round"/><polyline points="947.6,472.2 952.0,472.4 958.8,472.4 960.5,474.5" fill="none" stroke="#ffe01e" stroke-width="5.0" stroke-linecap="round" stroke-linejoin="round"/><polyline points="960.8,490.3 961.4,503.0 963.0,512.4 1002.0,512.4" fill="none" stroke="#ffe01e" stroke-width="5.0" stroke-linecap="round" stroke-linejoin="round"/><use href="#mk" x="946.5" y="447.0"/><use href="#mk" x="946.5" y="465.8"/><use href="#mk" x="946.5" y="479.0"/><use href="#mk" x="946.5" y="512.4"/><use href="#mk" x="960.5" y="484.0"/><polyline points="1006.5,512.4 1006.5,428.2" fill="none" stroke="#f7f2b4" stroke-width="1.25"/><polyline points="1020.5,474.0 1020.5,500.0" fill="none" stroke="#f7f2b4" stroke-width="1.25"/><polyline points="1006.9,443.0 1007.6,466.0" fill="none" stroke="#ffe01e" stroke-width="2.3" stroke-linecap="round" stroke-linejoin="round"/><polyline points="1007.6,470.8 1012.0,472.4 1018.5,472.4 1020.5,474.5" fill="none" stroke="#ffe01e" stroke-width="5.0" stroke-linecap="round" stroke-linejoin="round"/><polyline points="1020.3,488.4 1020.8,503.0 1022.4,512.4 1065.0,512.4" fill="none" stroke="#ffe01e" stroke-width="5.0" stroke-linecap="round" stroke-linejoin="round"/><use href="#mk" x="1006.5" y="428.2"/><use href="#mk" x="1007.6" y="452.7"/><use href="#mk" x="1006.5" y="512.4"/><use href="#mk" x="1020.5" y="484.6"/><use href="#mk" x="1020.4" y="497.0"/><line x1="824.9" x2="1110.3" y1="469.5" y2="469.5" stroke="#a32020" stroke-width="1.2" opacity="0.8"/></svg><svg style="position:absolute;left:0;top:0;pointer-events:none" width="1170" height="732"><rect x="818.7" y="533.1" width="4.6" height="1.2" fill="#222"/><rect x="818.7" y="511.7" width="4.6" height="1.2" fill="#222"/><rect x="818.7" y="490.3" width="4.6" height="1.2" fill="#222"/><rect x="818.7" y="468.9" width="4.6" height="1.2" fill="#222"/><rect x="818.7" y="447.5" width="4.6" height="1.2" fill="#222"/><rect x="818.7" y="426.1" width="4.6" height="1.2" fill="#222"/><rect x="818.7" y="404.7" width="4.6" height="1.2" fill="#222"/><rect x="824.8" y="535.8" width="1.2" height="5" fill="#222"/><rect x="881.5" y="535.8" width="1.2" height="5" fill="#222"/><rect x="938.2" y="535.8" width="1.2" height="5" fill="#222"/><rect x="995.0" y="535.8" width="1.2" height="5" fill="#222"/><rect x="1051.8" y="535.8" width="1.2" height="5" fill="#222"/><rect x="1108.5" y="535.8" width="1.2" height="5" fill="#222"/></svg><div style="position:absolute;top:526.0px;font-size:12px;line-height:17px;height:17px;white-space:nowrap;color:#1c1c1c;right:354.9px;text-align:right;">-5</div><div style="position:absolute;top:504.6px;font-size:12px;line-height:17px;height:17px;white-space:nowrap;color:#1c1c1c;right:354.9px;text-align:right;">0</div><div style="position:absolute;top:483.2px;font-size:12px;line-height:17px;height:17px;white-space:nowrap;color:#1c1c1c;right:354.9px;text-align:right;">5</div><div style="position:absolute;top:461.8px;font-size:12px;line-height:17px;height:17px;white-space:nowrap;color:#1c1c1c;right:354.9px;text-align:right;">10</div><div style="position:absolute;top:440.4px;font-size:12px;line-height:17px;height:17px;white-space:nowrap;color:#1c1c1c;right:354.9px;text-align:right;">15</div><div style="position:absolute;top:419.0px;font-size:12px;line-height:17px;height:17px;white-space:nowrap;color:#1c1c1c;right:354.9px;text-align:right;">20</div><div style="position:absolute;top:397.6px;font-size:12px;line-height:17px;height:17px;white-space:nowrap;color:#1c1c1c;right:354.9px;text-align:right;">25</div><div style="position:absolute;top:542.0px;font-size:12px;line-height:17px;height:17px;white-space:nowrap;color:#1c1c1c;left:824.5px;width:400px;margin-left:-200px;text-align:center;">-100</div><div style="position:absolute;top:542.0px;font-size:12px;line-height:17px;height:17px;white-space:nowrap;color:#1c1c1c;left:881.2px;width:400px;margin-left:-200px;text-align:center;">0</div><div style="position:absolute;top:542.0px;font-size:12px;line-height:17px;height:17px;white-space:nowrap;color:#1c1c1c;left:938.0px;width:400px;margin-left:-200px;text-align:center;">100</div><div style="position:absolute;top:542.0px;font-size:12px;line-height:17px;height:17px;white-space:nowrap;color:#1c1c1c;left:994.7px;width:400px;margin-left:-200px;text-align:center;">200</div><div style="position:absolute;top:542.0px;font-size:12px;line-height:17px;height:17px;white-space:nowrap;color:#1c1c1c;left:1051.4px;width:400px;margin-left:-200px;text-align:center;">300</div><div style="position:absolute;top:542.0px;font-size:12px;line-height:17px;height:17px;white-space:nowrap;color:#1c1c1c;left:1108.2px;width:400px;margin-left:-200px;text-align:center;">400</div><div style="position:absolute;top:560.3px;font-size:12px;line-height:17px;height:17px;white-space:nowrap;color:#1c1c1c;left:959.7px;width:400px;margin-left:-200px;text-align:center;"><span class="cj">时间</span>(Sec)</div><div style="position:absolute;left:790.5px;top:469.0px;width:200px;height:18px;margin-left:-100px;margin-top:-9px;line-height:18px;font-size:12px;text-align:center;white-space:nowrap;color:#1c1c1c;transform:rotate(-90deg);"><span class="cj">升温速度</span>(<span class="cj">℃</span>/S)</div><div style="position:absolute;left:1024.5px;top:371.0px;width:114.7px;height:25.2px;box-sizing:border-box;background:linear-gradient(90deg,#c6c6c6 0,#d6d6d6 7%,#cecece 30%,#c2c2c2 60%,#b0b0b0 86%,#a2a2a2 93.5%,#808080 95.5%,#6e6e6e 100%);border-top:1px solid #e6e6e6;border-bottom:2px solid #787878;border-radius:2px;box-shadow:0 1px 0 #9c9c9c;"></div><div style="position:absolute;top:374.8px;font-size:12px;line-height:17px;height:17px;white-space:nowrap;color:#1c1c1c;left:1042.0px;"><span class="cj">温度</span></div><div style="position:absolute;left:1096.0px;top:373.0px;width:28.5px;height:20.3px;background:#000;box-sizing:border-box;border:1px solid #d8d860;border-width:0 1px 1px 0;"></div><svg style="position:absolute;left:1096px;top:373px" width="28.5" height="20.3" viewBox="1096 373 28.5 20.3"><polyline points="1099,388 1108.1,376.2 1118.3,388 1123.5,382.4" fill="none" stroke="#f2f2d0" stroke-width="1"/><rect x="1097.2" y="385.8" width="3.6" height="4.4" fill="#f0f028"/><rect x="1106.1" y="374.4" width="4.2" height="4" fill="#f0f028"/><rect x="1116.2" y="385.8" width="4.2" height="4.4" fill="#f0f028"/></svg><div style="position:absolute;top:600.4px;font-size:12px;line-height:17px;height:17px;white-space:nowrap;color:#1c1c1c;left:489.5px;"><span class="cj">曲线保存</span></div><div style="position:absolute;left:540.7px;top:597.0px;width:94.2px;height:21.0px;background:#fff;"></div><div style="position:absolute;top:600.4px;font-size:12px;line-height:17px;height:17px;white-space:nowrap;color:#1c1c1c;left:543.7px;"><span class="cj">失效曲线</span></div><div style="position:absolute;left:617.3px;top:598.4px;width:16.5px;height:18.3px;box-sizing:border-box;background:#e1e1e1;border:1px solid #adadad;"></div><svg style="position:absolute;left:617.3px;top:598.4px" width="16.5" height="18.3"><path d="M4.6 7.8L8.2 11.4L11.8 7.8" fill="none" stroke="#444" stroke-width="1.1"/></svg><div style="position:absolute;left:0.0px;top:622.0px;width:1170.0px;height:1.6px;background:#5e5e5e;"></div><div style="position:absolute;left:0.0px;top:623.6px;width:1170.0px;height:3.4px;background:#bdbdbd;"></div><div style="position:absolute;left:0.0px;top:627.0px;width:1170.0px;height:1.6px;background:#666;"></div><div style="position:absolute;left:0.0px;top:628.6px;width:1170.0px;height:1.2px;background:#e4e4e4;"></div><div style="position:absolute;left:0.0px;top:629.8px;width:1170.0px;height:4.0px;background:#adadad;"></div><div style="position:absolute;left:-4.0px;top:633.8px;width:452.0px;height:1.2px;background:#5c5c5c;"></div><div style="position:absolute;left:-3.0px;top:635.2px;width:450.0px;height:1.4px;background:#e2e2e2;"></div><div style="position:absolute;left:-4.0px;top:716.5px;width:452.0px;height:1.2px;background:#5c5c5c;"></div><div style="position:absolute;left:-4.0px;top:717.7px;width:453.0px;height:1.2px;background:#e2e2e2;"></div><div style="position:absolute;left:447.0px;top:633.8px;width:1.2px;height:83.7px;background:#5c5c5c;"></div><div style="position:absolute;left:448.3px;top:634.3px;width:1.4px;height:84.2px;background:#e2e2e2;"></div><div style="position:absolute;left:-4.0px;top:633.8px;width:1.2px;height:83.7px;background:#5c5c5c;"></div><div style="position:absolute;left:-2.7px;top:635.2px;width:1.4px;height:81.3px;background:#e2e2e2;"></div><div style="position:absolute;left:448.2px;top:634.8px;width:137.9px;height:1.2px;background:#5c5c5c;"></div><div style="position:absolute;left:449.2px;top:636.2px;width:135.9px;height:1.4px;background:#e2e2e2;"></div><div style="position:absolute;left:448.2px;top:717.0px;width:137.9px;height:1.2px;background:#5c5c5c;"></div><div style="position:absolute;left:448.2px;top:718.2px;width:138.9px;height:1.2px;background:#e2e2e2;"></div><div style="position:absolute;left:585.1px;top:634.8px;width:1.2px;height:83.2px;background:#5c5c5c;"></div><div style="position:absolute;left:586.4px;top:635.3px;width:1.4px;height:83.7px;background:#e2e2e2;"></div><div style="position:absolute;left:449.5px;top:636.2px;width:1.4px;height:80.8px;background:#e2e2e2;"></div><div style="position:absolute;left:588.2px;top:634.8px;width:141.9px;height:1.2px;background:#5c5c5c;"></div><div style="position:absolute;left:589.2px;top:636.2px;width:139.9px;height:1.4px;background:#e2e2e2;"></div><div style="position:absolute;left:588.2px;top:716.8px;width:141.9px;height:1.2px;background:#5c5c5c;"></div><div style="position:absolute;left:588.2px;top:718.0px;width:142.9px;height:1.2px;background:#e2e2e2;"></div><div style="position:absolute;left:729.1px;top:634.8px;width:1.2px;height:83.0px;background:#5c5c5c;"></div><div style="position:absolute;left:730.4px;top:635.3px;width:1.4px;height:83.5px;background:#e2e2e2;"></div><div style="position:absolute;left:588.2px;top:634.8px;width:1.2px;height:83.0px;background:#5c5c5c;"></div><div style="position:absolute;left:589.5px;top:636.2px;width:1.4px;height:80.6px;background:#e2e2e2;"></div><div style="position:absolute;left:732.0px;top:634.8px;width:160.0px;height:1.2px;background:#5c5c5c;"></div><div style="position:absolute;left:733.0px;top:636.2px;width:158.0px;height:1.4px;background:#e2e2e2;"></div><div style="position:absolute;left:732.0px;top:717.3px;width:160.0px;height:1.2px;background:#5c5c5c;"></div><div style="position:absolute;left:732.0px;top:718.5px;width:161.0px;height:1.2px;background:#e2e2e2;"></div><div style="position:absolute;left:891.0px;top:634.8px;width:1.2px;height:83.5px;background:#5c5c5c;"></div><div style="position:absolute;left:892.3px;top:635.3px;width:1.4px;height:84.0px;background:#e2e2e2;"></div><div style="position:absolute;left:732.0px;top:634.8px;width:1.2px;height:83.5px;background:#5c5c5c;"></div><div style="position:absolute;left:733.3px;top:636.2px;width:1.4px;height:81.1px;background:#e2e2e2;"></div><div style="position:absolute;left:894.1px;top:634.8px;width:255.8px;height:1.2px;background:#5c5c5c;"></div><div style="position:absolute;left:895.1px;top:636.2px;width:253.8px;height:1.4px;background:#e2e2e2;"></div><div style="position:absolute;left:894.1px;top:717.4px;width:255.8px;height:1.2px;background:#5c5c5c;"></div><div style="position:absolute;left:894.1px;top:718.6px;width:256.8px;height:1.2px;background:#e2e2e2;"></div><div style="position:absolute;left:1148.9px;top:634.8px;width:1.2px;height:83.6px;background:#5c5c5c;"></div><div style="position:absolute;left:1150.2px;top:635.3px;width:1.4px;height:84.1px;background:#e2e2e2;"></div><div style="position:absolute;left:894.1px;top:634.8px;width:1.2px;height:83.6px;background:#5c5c5c;"></div><div style="position:absolute;left:895.4px;top:636.2px;width:1.4px;height:81.2px;background:#e2e2e2;"></div><div style="position:absolute;top:643.7px;font-size:12px;line-height:17px;height:17px;white-space:nowrap;color:#1c1c1c;left:-5.5px;"><span class="cj">升温</span></div><div style="position:absolute;left:23.0px;top:643.0px;width:80.7px;height:12.5px;background:#b9b9b9;border-style:solid;border-width:2.4px;border-color:#888 #c0c0c0 #c0c0c0 #888"></div><div style="position:absolute;left:25.6px;top:645.7px;width:58.4px;height:12.0px;background:linear-gradient(180deg,#2c58ea 0,#2450ea 25%,#1236dc 55%,#0a22bc 85%,#081a98 100%);"></div><div style="position:absolute;top:642.9px;font-size:12px;line-height:17px;height:17px;white-space:nowrap;color:#1c1c1c;left:124.5px;"><span class="cj">保温</span></div><div style="position:absolute;left:148.8px;top:643.0px;width:81.4px;height:12.5px;background:#b9b9b9;border-style:solid;border-width:2.4px;border-color:#888 #c0c0c0 #c0c0c0 #888"></div><div style="position:absolute;left:151.4px;top:645.7px;width:80.4px;height:12.0px;background:linear-gradient(180deg,#2c58ea 0,#2450ea 25%,#1236dc 55%,#0a22bc 85%,#081a98 100%);"></div><div style="position:absolute;left:238.2px;top:639.4px;width:28.4px;height:19.4px;background:#dadada;border-style:solid;border-width:2.6px;border-color:#8c8c8c #bebebe #bebebe #8c8c8c"></div><div style="position:absolute;top:643.7px;font-size:12px;line-height:17px;height:17px;white-space:nowrap;color:#1c1c1c;left:243.4px;">60</div><div style="position:absolute;top:642.9px;font-size:12px;line-height:17px;height:17px;white-space:nowrap;color:#1c1c1c;left:273.8px;"><span class="cj">冷却</span></div><div style="position:absolute;left:297.9px;top:643.0px;width:81.7px;height:12.5px;background:#b9b9b9;border-style:solid;border-width:2.4px;border-color:#888 #c0c0c0 #c0c0c0 #888"></div><div style="position:absolute;left:300.5px;top:645.7px;width:34.5px;height:12.0px;background:linear-gradient(180deg,#2c58ea 0,#2450ea 25%,#1236dc 55%,#0a22bc 85%,#081a98 100%);"></div><div style="position:absolute;left:389.0px;top:639.4px;width:28.8px;height:19.4px;background:#dadada;border-style:solid;border-width:2.6px;border-color:#8c8c8c #bebebe #bebebe #8c8c8c"></div><div style="position:absolute;top:643.7px;font-size:12px;line-height:17px;height:17px;white-space:nowrap;color:#1c1c1c;left:394.2px;">16</div><div style="position:absolute;top:643.0px;font-size:11.2px;line-height:16px;height:16px;white-space:nowrap;color:#1c1c1c;left:426.4px;">S</div><div style="position:absolute;top:671.7px;font-size:12px;line-height:17px;height:17px;white-space:nowrap;color:#1c1c1c;right:1128.7px;text-align:right;"><span class="cj">当前状态</span></div><div style="position:absolute;left:48.0px;top:667.2px;width:372.8px;height:18.6px;background:#dadada;border-style:solid;border-width:2.6px;border-color:#8c8c8c #bebebe #bebebe #8c8c8c"></div><div style="position:absolute;top:671.7px;font-size:12px;line-height:17px;height:17px;white-space:nowrap;color:#1c1c1c;left:53.4px;"><span class="cj">测试已经停止。</span></div><div style="position:absolute;top:695.5px;font-size:12px;line-height:17px;height:17px;white-space:nowrap;color:#1c1c1c;right:1150.3px;text-align:right;"><span class="cj">测试</span></div><div style="position:absolute;left:24.1px;top:694.0px;width:18.4px;height:18.4px;border-radius:50%;background:linear-gradient(135deg,#868686 0,#a4a4a4 45%,#f4f4f4 100%)"></div><div style="position:absolute;left:25.9px;top:695.8px;width:14.8px;height:14.8px;border-radius:50%;background:radial-gradient(circle at 38% 36%,#3f6e24 0,#2b5415 36%,#183a0a 70%,#0b2204 100%)"></div><div style="position:absolute;top:695.5px;font-size:12px;line-height:17px;height:17px;white-space:nowrap;color:#1c1c1c;right:1090.3px;text-align:right;"><span class="cj">升温</span></div><div style="position:absolute;left:84.8px;top:694.0px;width:18.4px;height:18.4px;border-radius:50%;background:linear-gradient(135deg,#868686 0,#a4a4a4 45%,#f4f4f4 100%)"></div><div style="position:absolute;left:86.6px;top:695.8px;width:14.8px;height:14.8px;border-radius:50%;background:radial-gradient(circle at 38% 36%,#3f6e24 0,#2b5415 36%,#183a0a 70%,#0b2204 100%)"></div><div style="position:absolute;top:695.5px;font-size:12px;line-height:17px;height:17px;white-space:nowrap;color:#1c1c1c;right:1028.4px;text-align:right;"><span class="cj">保温</span></div><div style="position:absolute;left:146.1px;top:694.0px;width:18.4px;height:18.4px;border-radius:50%;background:linear-gradient(135deg,#868686 0,#a4a4a4 45%,#f4f4f4 100%)"></div><div style="position:absolute;left:147.9px;top:695.8px;width:14.8px;height:14.8px;border-radius:50%;background:radial-gradient(circle at 38% 36%,#3f6e24 0,#2b5415 36%,#183a0a 70%,#0b2204 100%)"></div><div style="position:absolute;top:695.5px;font-size:12px;line-height:17px;height:17px;white-space:nowrap;color:#1c1c1c;right:966.4px;text-align:right;"><span class="cj">冷却</span></div><div style="position:absolute;left:208.0px;top:694.0px;width:18.4px;height:18.4px;border-radius:50%;background:linear-gradient(135deg,#868686 0,#a4a4a4 45%,#f4f4f4 100%)"></div><div style="position:absolute;left:209.8px;top:695.8px;width:14.8px;height:14.8px;border-radius:50%;background:radial-gradient(circle at 38% 36%,#3f6e24 0,#2b5415 36%,#183a0a 70%,#0b2204 100%)"></div><div style="position:absolute;top:695.5px;font-size:12px;line-height:17px;height:17px;white-space:nowrap;color:#1c1c1c;right:904.3px;text-align:right;"><span class="cj">保护</span></div><div style="position:absolute;left:269.8px;top:694.0px;width:18.4px;height:18.4px;border-radius:50%;background:linear-gradient(135deg,#868686 0,#a4a4a4 45%,#f4f4f4 100%)"></div><div style="position:absolute;left:271.6px;top:695.8px;width:14.8px;height:14.8px;border-radius:50%;background:radial-gradient(circle at 38% 36%,#3f6e24 0,#2b5415 36%,#183a0a 70%,#0b2204 100%)"></div><div style="position:absolute;top:695.5px;font-size:12px;line-height:17px;height:17px;white-space:nowrap;color:#1c1c1c;right:842.2px;text-align:right;"><span class="cj">失效</span></div><div style="position:absolute;left:332.3px;top:694.0px;width:18.4px;height:18.4px;border-radius:50%;background:linear-gradient(135deg,#868686 0,#a4a4a4 45%,#f4f4f4 100%)"></div><div style="position:absolute;left:334.1px;top:695.8px;width:14.8px;height:14.8px;border-radius:50%;background:radial-gradient(circle at 38% 36%,#3f6e24 0,#2b5415 36%,#183a0a 70%,#0b2204 100%)"></div><div style="position:absolute;top:695.5px;font-size:12px;line-height:17px;height:17px;white-space:nowrap;color:#1c1c1c;right:780.4px;text-align:right;"><span class="cj">安全</span></div><div style="position:absolute;left:394.0px;top:694.0px;width:18.4px;height:18.4px;border-radius:50%;background:linear-gradient(135deg,#868686 0,#a4a4a4 45%,#f4f4f4 100%)"></div><div style="position:absolute;left:395.8px;top:695.8px;width:14.8px;height:14.8px;border-radius:50%;background:radial-gradient(circle at 38% 36%,#3f6e24 0,#2b5415 36%,#183a0a 70%,#0b2204 100%)"></div><div style="position:absolute;top:652.7px;font-size:12px;line-height:17px;height:17px;white-space:nowrap;color:#1c1c1c;left:457.6px;letter-spacing:-0.2px;"><span class="cj" style="letter-spacing:0">已测试时间</span>(S)</div><div style="position:absolute;left:536.5px;top:647.4px;width:37.2px;height:19.4px;background:#dadada;border-style:solid;border-width:2.6px;border-color:#8c8c8c #bebebe #bebebe #8c8c8c"></div><div style="position:absolute;top:652.1px;font-size:12px;line-height:17px;height:17px;white-space:nowrap;color:#1c1c1c;left:542.2px;">100.0</div><div style="position:absolute;top:691.7px;font-size:12px;line-height:17px;height:17px;white-space:nowrap;color:#1c1c1c;left:468.8px;"><span class="cj">第</span></div><div style="position:absolute;left:485.1px;top:689.8px;width:28.7px;height:18.0px;background:#dadada;border-style:solid;border-width:2.6px;border-color:#8c8c8c #bebebe #bebebe #8c8c8c"></div><div style="position:absolute;top:693.5px;font-size:12px;line-height:17px;height:17px;white-space:nowrap;color:#1c1c1c;left:490.4px;">3</div><div style="position:absolute;top:691.7px;font-size:12px;line-height:17px;height:17px;white-space:nowrap;color:#1c1c1c;left:519.2px;"><span class="cj">共</span></div><div style="position:absolute;left:535.4px;top:689.8px;width:25.8px;height:18.0px;background:#dadada;border-style:solid;border-width:2.6px;border-color:#8c8c8c #bebebe #bebebe #8c8c8c"></div><div style="position:absolute;top:693.5px;font-size:12px;line-height:17px;height:17px;white-space:nowrap;color:#1c1c1c;left:540.4px;">3</div><div style="position:absolute;top:691.7px;font-size:12px;line-height:17px;height:17px;white-space:nowrap;color:#1c1c1c;left:568.2px;"><span class="cj">点</span></div><div style="position:absolute;top:649.9px;font-size:12px;line-height:17px;height:17px;white-space:nowrap;color:#1c1c1c;right:496.6px;text-align:right;"><span class="cj">初始电阻</span>(mΩ)</div><div style="position:absolute;left:678.5px;top:643.4px;width:44.6px;height:18.6px;background:#dadada;border-style:solid;border-width:2.6px;border-color:#8c8c8c #bebebe #bebebe #8c8c8c"></div><div style="position:absolute;top:647.5px;font-size:12px;line-height:17px;height:17px;white-space:nowrap;color:#1c1c1c;left:683.6px;">363.7</div><div style="position:absolute;top:671.5px;font-size:12px;line-height:17px;height:17px;white-space:nowrap;color:#1c1c1c;right:496.6px;text-align:right;"><span class="cj">电阻</span>(mΩ)</div><div style="position:absolute;left:678.5px;top:668.9px;width:44.6px;height:18.5px;background:#dadada;border-style:solid;border-width:2.6px;border-color:#8c8c8c #bebebe #bebebe #8c8c8c"></div><div style="position:absolute;left:683.6px;top:673.5px;width:39.2px;height:17px;line-height:17px;overflow:hidden;white-space:nowrap;font-size:12px">362.448</div><div style="position:absolute;top:695.1px;font-size:12px;line-height:17px;height:17px;white-space:nowrap;color:#1c1c1c;right:496.6px;text-align:right;"><span class="cj">当前速度</span>(<span class="cj">℃</span>/S)</div><div style="position:absolute;left:678.5px;top:692.4px;width:44.6px;height:19.2px;background:#b9b9b9;border-style:solid;border-width:2.6px;border-color:#8c8c8c #c4c4c4 #c4c4c4 #8c8c8c"></div><div style="position:absolute;top:697.1px;font-size:12px;line-height:17px;height:17px;white-space:nowrap;color:#1c1c1c;left:683.9px;">-0</div><div style="position:absolute;top:650.2px;font-size:17.5px;line-height:24px;height:24px;white-space:nowrap;color:#141414;font-weight:bold;left:740.0px;"><span class="cj">温度</span>(<span class="cj">℃</span>)</div><div style="position:absolute;left:809.1px;top:645.1px;width:66.2px;height:26.0px;background:#6cfc06;border-style:solid;border-width:2.8px;border-color:#8c8c8c #bebebe #bebebe #8c8c8c"></div><div style="position:absolute;top:649.2px;font-size:17px;line-height:24px;height:24px;white-space:nowrap;color:#141414;font-weight:bold;left:816.3px;letter-spacing:-0.5px;">10</div><div style="position:absolute;top:689.0px;font-size:17.5px;line-height:24px;height:24px;white-space:nowrap;color:#141414;font-weight:bold;left:741.8px;"><span class="cj">最高</span>(<span class="cj">℃</span>)</div><div style="position:absolute;left:810.4px;top:684.5px;width:64.7px;height:24.9px;background:#ff6c28;border-style:solid;border-width:2.8px;border-color:#8c8c8c #bebebe #bebebe #8c8c8c"></div><div style="position:absolute;top:689.0px;font-size:17px;line-height:24px;height:24px;white-space:nowrap;color:#141414;font-weight:bold;left:817.6px;letter-spacing:0.35px;">225.8</div><div style="position:absolute;top:649.8px;font-size:17px;line-height:24px;height:24px;white-space:nowrap;color:#1c1c1c;left:895.3px;"><span class="cj" style="font-weight:bold;color:#141414">测试结果</span></div><div style="position:absolute;left:967.0px;top:644.3px;width:159.9px;height:27.9px;background:#6cfc06;border-style:solid;border-width:3.0px;border-color:#8c8c8c #bebebe #bebebe #8c8c8c"></div><div style="position:absolute;top:649.2px;font-size:17.5px;line-height:24px;height:24px;white-space:nowrap;color:#141414;font-weight:bold;left:973.6px;letter-spacing:-0.75px;">PASS</div><div style="position:absolute;top:688.6px;font-size:17px;line-height:24px;height:24px;white-space:nowrap;color:#1c1c1c;left:904.4px;"><span class="cj" style="font-weight:bold;color:#141414">失</span></div><div style="position:absolute;top:688.6px;font-size:17px;line-height:24px;height:24px;white-space:nowrap;color:#1c1c1c;left:946.4px;"><span class="cj" style="font-weight:bold;color:#141414">效</span></div><div style="position:absolute;left:967.0px;top:680.2px;width:159.9px;height:32.8px;background:#dddddd;border-style:solid;border-width:3.0px;border-color:#8c8c8c #bebebe #bebebe #8c8c8c"></div><div style="position:absolute;left:10.3px;top:730.4px;width:78.2px;height:2.0px;background:#d6d6d6;"></div><div style="position:absolute;left:109.0px;top:730.4px;width:77.0px;height:2.0px;background:#d6d6d6;"></div><div style="position:absolute;left:207.7px;top:730.4px;width:97.3px;height:2.0px;background:#d6d6d6;"></div><div style="position:absolute;left:352.0px;top:730.4px;width:96.5px;height:2.0px;background:#d6d6d6;"></div><div style="position:absolute;left:472.0px;top:730.4px;width:84.4px;height:2.0px;background:#d6d6d6;"></div><div style="position:absolute;left:587.0px;top:730.4px;width:95.0px;height:2.0px;background:#d6d6d6;"></div><div style="position:absolute;left:702.5px;top:730.4px;width:94.9px;height:2.0px;background:#d6d6d6;"></div><div style="position:absolute;left:818.0px;top:730.4px;width:70.0px;height:2.0px;background:#d6d6d6;"></div><div style="position:absolute;top:725.1px;font-size:12px;line-height:17px;height:17px;white-space:nowrap;color:#1c1c1c;left:1005.4px;"><span class="cj">打开</span></div><div style="position:absolute;left:1039.6px;top:724.6px;width:26.0px;height:8.0px;background:#8c8c8c;"></div><div style="position:absolute;top:699.0px;font-size:18.5px;line-height:26px;height:26px;white-space:nowrap;color:#1c1c1c;left:913.6px;"><svg role="img" aria-label="昆山高飞机电科技有限公司" width="235.44" height="18.50" viewBox="0 0 235.44 18.50" style="display:inline-block;vertical-align:-2.22px;overflow:visible;"><title>昆山高飞机电科技有限公司</title><text x="0" y="16.28" font-family="'Liberation Sans','Noto Sans CJK SC',sans-serif" font-size="18.5" letter-spacing="1.13" fill="#101010" stroke="#ececec" stroke-width="2.04" paint-order="stroke" stroke-linejoin="round">昆山高飞机电科技有限公司</text></svg></div></div></body></html>
